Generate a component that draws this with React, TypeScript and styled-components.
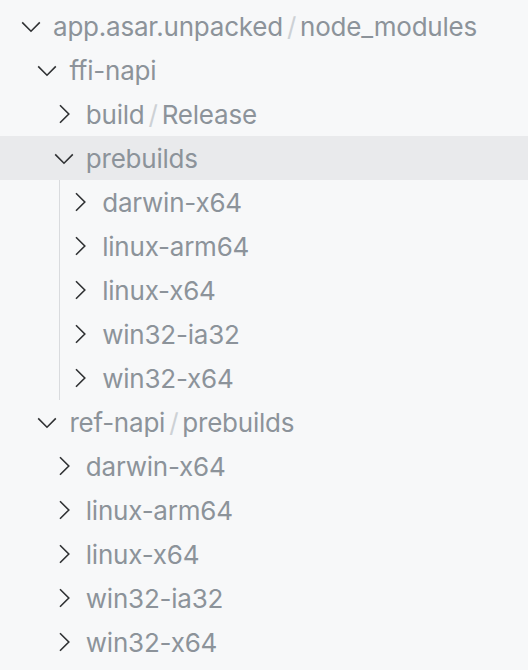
import React from 'react';
import { styled, createGlobalStyle } from 'styled-components';

const GlobalStyle = createGlobalStyle`
  html, body {
    margin: 0;
    padding: 0;
    background: #f7f8f9;
  }
  body {
    font-family: Inter, "Noto Sans", "Liberation Sans", sans-serif;
  }
`;

interface TreeNode {
  parts: string[];
  depth: number;
  open: boolean;
  selected?: boolean;
  children?: TreeNode[];
}

const platforms = ['darwin-x64', 'linux-arm64', 'linux-x64', 'win32-ia32', 'win32-x64'];

const tree: TreeNode[] = [
  { parts: ['app.asar.unpacked', 'node_modules'], depth: 0, open: true },
  { parts: ['ffi-napi'], depth: 1, open: true },
  { parts: ['build', 'Release'], depth: 2, open: false },
  {
    parts: ['prebuilds'],
    depth: 2,
    open: true,
    selected: true,
    children: platforms.map(p => ({ parts: [p], depth: 3, open: false })),
  },
  { parts: ['ref-napi', 'prebuilds'], depth: 1, open: true },
  ...platforms.map(p => ({ parts: [p], depth: 2, open: false })),
];

function Chevron({ open }: { open: boolean }) {
  return (
    <Twistie viewBox="0 0 16 16" width="32" height="32">
      {open ? (
        <path d="M3.6 6.2 L8 10.6 L12.4 6.2" />
      ) : (
        <path d="M6 3.6 L10.4 8 L6 12.4" />
      )}
    </Twistie>
  );
}

function TreeRow({ node, guided }: { node: TreeNode; guided?: boolean }) {
  return (
    <>
      <Row $depth={node.depth} $selected={!!node.selected} $guided={!!guided}>
        <Chevron open={node.open} />
        <Label>
          {node.parts.map((part, i) => (
            <React.Fragment key={i}>
              {i > 0 && <Sep>/</Sep>}
              <span>{part}</span>
            </React.Fragment>
          ))}
        </Label>
      </Row>
      {node.children && (
        <Guide>
          {node.children.map((child, i) => (
            <TreeRow key={i} node={child} guided />
          ))}
        </Guide>
      )}
    </>
  );
}

export default function App() {
  return (
    <>
      <GlobalStyle />
      <Explorer>
        {tree.map((node, i) => (
          <TreeRow key={i} node={node} />
        ))}
      </Explorer>
    </>
  );
}

const Explorer = styled.div`
  display: flex;
  flex-direction: column;
  padding-top: 4px;
  width: 528px;
`;

const Row = styled.div<{ $depth: number; $selected: boolean; $guided: boolean }>`
  display: flex;
  align-items: center;
  height: 44px;
  padding-left: ${p => 15 + p.$depth * 16.4 - (p.$guided ? 60 : 0)}px;
  background: ${p => (p.$selected ? '#e9eaec' : 'transparent')};
`;

const Twistie = styled.svg`
  flex: none;
  fill: none;
  stroke: #2f3133;
  stroke-width: 0.8;
  stroke-linecap: butt;
  stroke-linejoin: miter;
  margin-right: 6px;
`;

const Label = styled.div`
  display: flex;
  align-items: center;
  font-size: 26px;
  letter-spacing: -0.22px;
  color: #8c939a;
  white-space: nowrap;
`;

const Sep = styled.span`
  color: #cdd1d5;
  margin: 0 4px;
`;

const Guide = styled.div`
  display: flex;
  flex-direction: column;
  margin-left: 59px;
  border-left: 1px solid #d9dbde;
`;
